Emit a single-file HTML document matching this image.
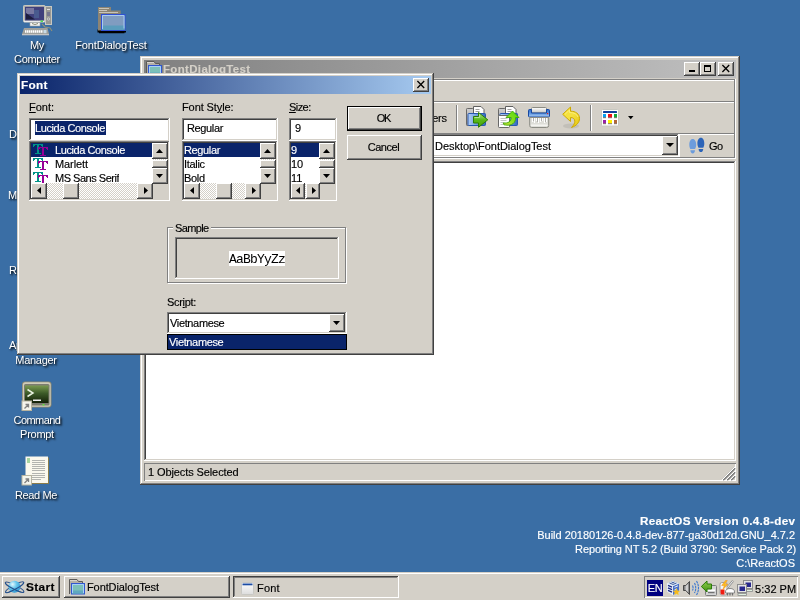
<!DOCTYPE html>
<html><head><meta charset="utf-8"><title>ReactOS</title>
<style>
*{box-sizing:border-box;margin:0;padding:0}
html,body{width:800px;height:600px;overflow:hidden}
body{background:#3A6EA5;position:relative;font-family:"Liberation Sans",sans-serif;font-size:11px;color:#000;line-height:13px}
.a{position:absolute}
.t{position:absolute;white-space:nowrap;line-height:13px;height:13px;-webkit-text-stroke:.15px}
.win{box-shadow:inset -1px -1px #404040,inset 1px 1px #D4D0C8,inset -2px -2px #808080,inset 2px 2px #fff;background:#D4D0C8}
.btn{box-shadow:inset -1px -1px #404040,inset 1px 1px #fff,inset -2px -2px #808080,inset 2px 2px #D4D0C8;background:#D4D0C8}
.sunk{box-shadow:inset -1px -1px #fff,inset 1px 1px #808080,inset -2px -2px #D4D0C8,inset 2px 2px #404040;background:#fff}
.dl{-webkit-text-stroke:0;color:#fff;text-shadow:1px 1px 2px rgba(0,0,0,.85),2px 2px 2px rgba(0,0,0,.45);text-align:center}
.w{color:#fff}
.track{background-color:#fff;background-image:conic-gradient(#D4D0C8 25%,#fff 0 50%,#D4D0C8 0 75%,#fff 0);background-size:2px 2px}
.sel{background:#0A246A;color:#fff}
svg{position:absolute;overflow:visible}
</style></head><body><div id="r" style="position:absolute;left:0;top:0;width:800px;height:600px;will-change:transform">
<!--DESKTOP-->
<!-- My Computer -->
<svg style="left:20px;top:4px" width="32" height="32" viewBox="20 4 32 32">
<rect x="45.500" y="6.500" width="6" height="18" fill="#989894" stroke="#c8c8c0" stroke-width="1"/>
<rect x="47" y="9" width="3" height="1" fill="#e0e0e0"/><rect x="47" y="12" width="3" height="4" fill="#787890"/><circle cx="48.500" cy="19" r="1.200" fill="none" stroke="#d0d0d0" stroke-width=".8"/>
<path d="M42 24l3 3 5 1 2 3" stroke="#909078" stroke-width="1.100" fill="none"/>
<rect x="23.500" y="5.500" width="21.500" height="16.500" rx=".8" fill="#b4b4ac" stroke="#c8c8c0" stroke-width="1"/>
<rect x="24" y="20.500" width="20.500" height="1.600" fill="#ececec"/>
<rect x="25" y="6.800" width="19" height="13.700" fill="#40407c"/>
<path d="M26 8h8v6h-8z" fill="#7878a0"/><path d="M34 10h5v8h-5z" fill="#50709c" opacity=".55"/><path d="M26 13l9 6.500h-9z" fill="#1c1c3c"/>
<rect x="40.500" y="20.500" width="2.500" height="1.400" fill="#40e040"/>
<rect x="30" y="22.500" width="10" height="3.500" fill="#f4f4f4" stroke="#a4a4a0" stroke-width=".6"/>
<path d="M32 23.500q3 2 6 0" stroke="#707050" stroke-width=".8" fill="none"/>
<path d="M24 28h23.500l1.500 6h-27z" fill="#a0a09c"/>
<path d="M25 31.500h17.500" stroke="#fff" stroke-width="2.400" stroke-dasharray="1.500 .5"/><rect x="43.500" y="30" width="3" height="3.200" fill="#c8dce8"/>
<rect x="22" y="34" width="27" height="1.300" fill="#c4c4c4"/>
</svg>
<div class="t dl" style="left:7px;top:39px;width:60px;letter-spacing:-.43px">My</div>
<div class="t dl" style="left:7px;top:53px;width:60px;letter-spacing:-.29px">Computer</div>
<!-- folder -->
<svg style="left:96px;top:4px" width="32" height="32" viewBox="96 4 32 32">
<path d="M97.500 29.500h27.500v1.500h1v1.500h-1.500v.8h-25.500v-.8h-1.500z" fill="#000"/>
<path d="M98 7h13v3.500h9.700v20h-22.700z" fill="#8c8474"/>
<path d="M99 8.500h10M99 10.500h8M99 12.500h19" stroke="#c8c4b8" stroke-width="1"/>
<rect x="101.500" y="14.500" width="23.500" height="16" fill="#809cc0" stroke="#3050d4" stroke-width="1"/>
<rect x="102" y="25.500" width="22.500" height="4.500" fill="#5a9cbc"/>
<path d="M102.500 29v-13.500h21.500v13" stroke="#a8ccf0" stroke-width="1" fill="none"/>
</svg>
<div class="t dl" style="left:71px;top:39px;width:80px;letter-spacing:-.14px">FontDialogTest</div>
<!-- partially hidden labels -->
<div class="t dl" style="left:9px;top:128px;text-align:left">Documents</div>
<div class="t dl" style="left:8px;top:189px;text-align:left">My Network</div>
<div class="t dl" style="left:9px;top:264px;text-align:left">Recycle Bin</div>
<div class="t dl" style="left:9px;top:339px;text-align:left;letter-spacing:-.3px">Applications</div>
<div class="t dl" style="left:6px;top:354px;width:60px;letter-spacing:-.27px">Manager</div>
<!-- Command Prompt -->
<svg style="left:20px;top:379px" width="32" height="32" viewBox="20 379 32 32">
<defs><linearGradient id="cg" x1="0" y1="0" x2="0" y2="1"><stop offset="0" stop-color="#7a9a50"/><stop offset=".45" stop-color="#3c5a28"/><stop offset="1" stop-color="#142008"/></linearGradient></defs>
<rect x="22" y="381.500" width="29.500" height="26" rx="3" fill="#8c8870"/>
<rect x="22.800" y="382.300" width="27.900" height="24.400" rx="2.500" fill="#d0ccb8"/>
<rect x="24" y="384" width="25.500" height="21.500" rx="1.500" fill="#7c7c70"/>
<rect x="25" y="385.500" width="23.500" height="17.500" fill="url(#cg)"/>
<path d="M27.500 389.500l5.500 3.500-5.500 3.500" stroke="#e8f0e0" stroke-width="1.500" fill="none"/>
<rect x="33" y="399.500" width="8" height="1.500" fill="#f0f0f0"/>
<rect x="42.500" y="404" width="2" height="1.500" fill="#60e040"/>
<rect x="22" y="401" width="9.500" height="9.500" fill="#f4f4ec" stroke="#b8b4a0" stroke-width="1"/>
<path d="M24.500 408.500l4-4m-3 0h3v3" stroke="#808080" stroke-width="1.300" fill="none"/>
</svg>
<div class="t dl" style="left:7px;top:414px;width:60px;letter-spacing:-.56px">Command</div>
<div class="t dl" style="left:7px;top:428px;width:60px;letter-spacing:-.28px">Prompt</div>
<!-- Read Me -->
<svg style="left:20px;top:453px" width="32" height="32" viewBox="20 453 32 32">
<rect x="26.500" y="457.500" width="22.500" height="26.500" fill="#8c7c48"/>
<rect x="25.500" y="456.500" width="22.500" height="26.500" fill="#fbf8ee"/>
<rect x="27" y="458" width="3" height="5" fill="#a8d4a0"/>
<path d="M32 460.500h13M32 462.500h13M32 464.500h13M32 466.500h13M32 468.500h13M32 470.500h13M32 473.500h13M32 475.500h13M32 477.500h13M32 479.500h9" stroke="#b4b4b0" stroke-width="1"/>
<rect x="22" y="475.500" width="9.500" height="9.500" fill="#f4f4ec" stroke="#b8b4a0" stroke-width="1"/>
<path d="M24.500 483l4-4m-3 0h3v3" stroke="#808080" stroke-width="1.300" fill="none"/>
</svg>
<div class="t dl" style="left:6px;top:489px;width:60px;letter-spacing:-.38px">Read Me</div>
<!--EXPLORER-->
<div class="a win" style="left:140px;top:56px;width:600px;height:429px"></div>
<div class="a" style="left:144px;top:60px;width:592px;height:18px;background:linear-gradient(90deg,#808080,#C0C0C0)"></div>
<svg style="left:146px;top:61px" width="16" height="16" viewBox="0 0 16 16"><path d="M.5 15V.5H8L9.500 2.500H13.500V5" fill="#b4b0a8" stroke="#5c5a58" stroke-width="1"/><path d="M1 1.500h7" stroke="#d8d4cc" stroke-width="1"/><rect x="2.500" y="4.500" width="13" height="10.500" fill="#7cc0b8" stroke="#3058d0" stroke-width="1"/><rect x="3" y="11.500" width="12" height="3" fill="#60a8c0"/><path d="M3.500 14V5.500H14.500V14" fill="none" stroke="#a8d0f8" stroke-width="1"/></svg>
<div class="t" style="left:163px;top:63px;font-weight:bold;color:#D4D0C8;letter-spacing:.35px;transform:scaleX(1.04);transform-origin:0 0">FontDialogTest</div>
<div class="a btn" style="left:684px;top:62px;width:16px;height:14px"></div>
<div class="a" style="left:689px;top:70px;width:6px;height:2px;background:#000"></div>
<div class="a btn" style="left:700px;top:62px;width:16px;height:14px"></div>
<div class="a" style="left:704px;top:65px;width:7px;height:7px;border:1px solid #000;border-top-width:2px"></div>
<div class="a btn" style="left:718px;top:62px;width:16px;height:14px"></div>
<svg style="left:722px;top:65px" width="8" height="7" viewBox="0 0 8 7"><path d="M0.4 0L7.2 7M7.2 0L0.4 7" stroke="#000" stroke-width="1.3" fill="none"/></svg>
<!-- rebar -->
<div class="a" style="left:144px;top:79px;width:591px;height:1px;background:#808080"></div>
<div class="a" style="left:144px;top:80px;width:592px;height:1px;background:#fff"></div>
<div class="a" style="left:734px;top:79px;width:1px;height:79px;background:#808080"></div>
<div class="a" style="left:735px;top:79px;width:1px;height:80px;background:#fff"></div>
<div class="a" style="left:144px;top:101px;width:590px;height:1px;background:#808080"></div>
<div class="a" style="left:144px;top:102px;width:590px;height:1px;background:#fff"></div>
<div class="a" style="left:144px;top:157px;width:591px;height:1px;background:#808080"></div>
<div class="a" style="left:144px;top:158px;width:592px;height:1px;background:#fff"></div>
<!-- toolbar -->
<div class="t" style="left:412px;top:112px;letter-spacing:-.3px">Folders</div>
<div class="a" style="left:456px;top:105px;width:1px;height:26px;background:#808080"></div>
<div class="a" style="left:457px;top:105px;width:1px;height:26px;background:#fff"></div>
<div class="a" style="left:590px;top:105px;width:1px;height:26px;background:#808080"></div>
<div class="a" style="left:591px;top:105px;width:1px;height:26px;background:#fff"></div>
<!--ICONS-->
<!-- address -->
<div class="a" style="left:144px;top:133px;width:590px;height:1px;background:#808080"></div>
<div class="a sunk" style="left:300px;top:134px;width:379px;height:23px"></div>
<div class="t" style="left:435px;top:140px;letter-spacing:-.04px">Desktop\FontDialogTest</div>
<div class="a btn" style="left:662px;top:136px;width:16px;height:19px"></div>
<svg style="left:666px;top:143px" width="8" height="4" viewBox="0 0 8 4"><path d="M0 0h8L4 4z" fill="#000"/></svg>
<div class="a" style="left:679px;top:134px;width:55px;height:1px;background:#fff"></div>
<div class="a" style="left:679px;top:134px;width:1px;height:23px;background:#fff"></div>
<div class="t" style="left:709px;top:140px;letter-spacing:-.5px">Go</div>
<!-- view -->
<div class="a sunk" style="left:144px;top:161px;width:592px;height:300px"></div>
<!-- status -->
<div class="a" style="left:144px;top:463px;width:592px;height:18px;box-shadow:inset 1px 1px #808080,inset -1px -1px #fff"></div>
<div class="t" style="left:148px;top:466px;letter-spacing:-.1px">1 Objects Selected</div>
<svg style="left:723px;top:468px" width="13" height="13" viewBox="0 0 13 13"><path d="M12 0L0 12M12 4L4 12M12 8L8 12" stroke="#808080" stroke-width="2" fill="none"/><path d="M12 -1L-1 12M12 3L3 12M12 7L7 12" stroke="#fff" stroke-width="1" fill="none"/></svg>
<!--ICONS-->
<svg style="left:462px;top:102px" width="180" height="30" viewBox="462 102 180 30">
<defs>
<linearGradient id="gf" x1="0" y1="0" x2="0" y2="1"><stop offset="0" stop-color="#d0d0d0"/><stop offset="1" stop-color="#9c9c9c"/></linearGradient>
<linearGradient id="bf" x1="0" y1="0" x2="1" y2="0"><stop offset="0" stop-color="#b4d0f4"/><stop offset=".5" stop-color="#6c9ce0"/><stop offset="1" stop-color="#3468c0"/></linearGradient>
<linearGradient id="ga" x1="0" y1="0" x2="0" y2="1"><stop offset="0" stop-color="#b8ec98"/><stop offset=".5" stop-color="#58b818"/><stop offset="1" stop-color="#48a408"/></linearGradient>
<linearGradient id="gb" x1="1" y1="0" x2="0" y2="1"><stop offset="0" stop-color="#48d808"/><stop offset=".6" stop-color="#90e020"/><stop offset="1" stop-color="#e0e040"/></linearGradient>
<linearGradient id="pp" x1="0" y1="0" x2="0" y2="1"><stop offset="0" stop-color="#fff"/><stop offset="1" stop-color="#c4c4c0"/></linearGradient>
<linearGradient id="sb" x1="0" y1="0" x2="0" y2="1"><stop offset="0" stop-color="#2c68c8"/><stop offset=".5" stop-color="#5c94e0"/><stop offset="1" stop-color="#b0d0f4"/></linearGradient>
<linearGradient id="ya" x1="0" y1="0" x2="1" y2="1"><stop offset="0" stop-color="#f8e438"/><stop offset=".5" stop-color="#f4e040"/><stop offset="1" stop-color="#e4c408"/></linearGradient>
<g id="cf">
<rect x="466.500" y="108.500" width="7" height="17" rx=".8" fill="url(#gf)" stroke="#686868" stroke-width="1"/>
<path d="M473.500 106.500h7.500l3 3v5h-10.500z" fill="#fff" stroke="#606060" stroke-width="1"/>
<path d="M475.500 109.500h4M475.500 111.500h4" stroke="#a0a0a0" stroke-width="1"/>
<rect x="468" y="113.500" width="17.500" height="12" rx=".8" fill="url(#bf)" stroke="#2858b0" stroke-width="1"/>
</g>
</defs>
<use href="#cf"/>
<path d="M473.500 116.500h5v-4l9.300 7.300-9.300 7.500v-4.300h-5z" fill="url(#ga)" stroke="#2c7c04" stroke-width="1" stroke-linejoin="round"/>
<path d="M474.500 117.500h5v-3" stroke="#d0f4b8" stroke-width=".8" fill="none" opacity=".8"/>
<use href="#cf" x="32"/>
<rect x="498.500" y="115.500" width="11" height="12" rx=".8" fill="#fff" stroke="#686868" stroke-width="1"/>
<path d="M500.500 118.500h7M500.500 120.500h6M500.500 122.500h4M500.500 124.500h4" stroke="#c4c4c4" stroke-width="1"/>
<path d="M512.500 111l6.500 6.500h-3.500c.3 5-3 9-11.500 7.300l-.8-1.800c5 .5 8-1.500 8-5.500h-5.200z" fill="url(#gb)" stroke="#3cac04" stroke-width=".9" stroke-linejoin="round"/>
<!-- shredder -->
<rect x="531.500" y="107.500" width="15" height="5.500" rx="1" fill="url(#pp)" stroke="#8c8c84" stroke-width="1"/>
<path d="M528.500 110.500q0-1 1-1h2v3.500h15v-3.500h2q1 0 1 1v5.500q0 1-1 1h-19q-1 0-1-1z" fill="url(#sb)" stroke="#1848a0" stroke-width="1"/>
<rect x="547" y="113" width="1.200" height="1.200" fill="#e02020"/>
<path d="M529.700 117.500h19v8q0 2-2 2h-15q-2 0-2-2z" fill="#deded8" stroke="#8c8c84" stroke-width="1"/>
<path d="M532.500 118v4M534.500 118v5M536.500 118v3M538.500 118v5M540.500 118v4M542.500 118v3M544.500 118v5M546.500 118v4" stroke="#fff" stroke-width="1"/>
<path d="M533.500 118v3M537.500 118v4M541.500 118v3M545.500 118v4" stroke="#a4a4a0" stroke-width=".8"/>
<rect x="531" y="124.500" width="16.500" height="1.500" fill="#f4f4f0"/>
<!-- undo -->
<ellipse cx="571" cy="126" rx="8" ry="2.500" fill="#a0a09c" opacity=".35"/>
<path d="M562.700 114.300l7.800-7.300v4.200c5 0 9 2.500 9 7.300 0 4-3 7.200-8 9 2.500-2.500 3.300-4.500 3.300-6.300 0-2-1.500-3.700-4.300-3.700v4z" fill="url(#ya)" stroke="#cca800" stroke-width="1" stroke-linejoin="round"/>
<path d="M565 114.300l4.500-4.300v2.500c4.500 0 7.500 1.500 8.500 4.500" stroke="#fcf088" stroke-width="1" fill="none" opacity=".8"/>
<!-- views -->
<rect x="601.500" y="109.500" width="17" height="16.500" rx="1" fill="#fff" stroke="#c8c8c0" stroke-width="1"/>
<rect x="603" y="111" width="14" height="2" rx=".5" fill="#10409c"/>
<rect x="603" y="114" width="3" height="3.500" fill="#08a0f0"/><rect x="608" y="114" width="4" height="3.500" fill="#f01018"/><rect x="614" y="114" width="3" height="3.500" fill="#10a838"/>
<rect x="603" y="120" width="3" height="3.500" fill="#9820a8"/><rect x="608" y="120" width="4" height="3.500" fill="#fff000"/><rect x="614" y="120" width="3" height="3.500" fill="#b06838"/>
<path d="M603 117.700h3M608 117.700h4M614 117.700h3M603 123.700h3M608 123.700h4M614 123.700h3" stroke="#604838" stroke-width=".7"/>
<path d="M628 116h5.500l-2.750 3.200z" fill="#000"/>
</svg>
<!-- go footprints -->
<svg style="left:688px;top:136px" width="18" height="19" viewBox="688 136 18 19">
<path d="M692.700 139c2.200 0 3.500 2.600 3.500 5.600 0 2-.5 3.400-1.100 4.400h-4.800c-.6-1-1-2.400-1-4.400 0-3 1.200-5.600 3.400-5.600z" fill="#6c9cdc"/><path d="M690.400 150.200h4.600c0 2-1 3.200-2.300 3.200s-2.300-1.200-2.300-3.200z" fill="#6c9cdc"/>
<path d="M700.900 137.700c2.200 0 3.400 2.600 3.400 5.600 0 2-.4 3.400-1 4.400h-4.800c-.6-1-1.100-2.400-1.100-4.400 0-3 1.300-5.600 3.500-5.600z" fill="#2c64b8"/><path d="M698.600 148.900h4.600c0 2-1 3.200-2.300 3.200s-2.300-1.200-2.300-3.200z" fill="#2c64b8"/>
</svg>
<!--DIALOG-->
<div class="a win" style="left:17px;top:73px;width:417px;height:282px"></div>
<div class="a" style="left:20px;top:76px;width:411px;height:18px;background:linear-gradient(90deg,#0A246A,#A6CAF0)"></div>
<div class="t w" style="left:21px;top:79px;font-weight:bold;letter-spacing:.3px;transform:scaleX(1.07);transform-origin:0 0">Font</div>
<div class="a btn" style="left:413px;top:78px;width:16px;height:14px"></div>
<svg style="left:417px;top:81px" width="8" height="7" viewBox="0 0 8 7"><path d="M0.4 0L7.2 7M7.2 0L0.4 7" stroke="#000" stroke-width="1.3" fill="none"/></svg>
<!-- labels -->
<div class="t" style="left:29px;top:101px"><u>F</u>ont:</div>
<div class="t" style="left:182px;top:101px;letter-spacing:-0.1px">Font St<u>y</u>le:</div>
<div class="t" style="left:289px;top:101px;letter-spacing:-0.57px"><u>S</u>ize:</div>
<!-- font combo -->
<div class="a sunk" style="left:29px;top:118px;width:141px;height:23px"></div>
<div class="a sel" style="left:35px;top:121px;width:71px;height:14px"></div>
<div class="t w" style="left:35px;top:122px;letter-spacing:-0.42px">Lucida Console</div>
<div class="a sunk" style="left:29px;top:141px;width:141px;height:60px"></div>
<div class="a sel" style="left:31px;top:143px;width:121px;height:14px"></div>
<div class="t w" style="left:55px;top:144px;letter-spacing:-0.42px">Lucida Console</div>
<div class="t" style="left:55px;top:158px;letter-spacing:-0.09px">Marlett</div>
<div class="t" style="left:55px;top:172px;height:12px;overflow:hidden;letter-spacing:-0.48px">MS Sans Serif</div>
<svg width="0" height="0"><defs><g id="tt"><path d="M0 0h10v3h-1v-1h-1v-1h-2v8h2v1h-6v-1h2v-8h-2v1h-1v1h-1z" fill="#009488"/><path d="M5 3h10v3h-1v-1h-1v-1h-2v7h2v1h-6v-1h2v-7h-2v1h-1v1h-1z" fill="#960096"/></g></defs></svg>
<svg style="left:33px;top:144px" width="16" height="13"><use href="#tt"/></svg>
<svg style="left:33px;top:158px" width="16" height="13"><use href="#tt"/></svg>
<svg style="left:33px;top:172px;overflow:hidden" width="16" height="11"><use href="#tt"/></svg>
<div class="a" style="left:30px;top:140px;width:139px;height:1px;background:#D4D0C8"></div><div class="a" style="left:31px;top:139px;width:137px;height:1px;background:#fff"></div>
<div class="a" style="left:183px;top:140px;width:94px;height:1px;background:#D4D0C8"></div><div class="a" style="left:184px;top:139px;width:92px;height:1px;background:#fff"></div>
<div class="a" style="left:290px;top:140px;width:46px;height:1px;background:#D4D0C8"></div><div class="a" style="left:291px;top:139px;width:44px;height:1px;background:#fff"></div>
<div class="a btn" style="left:152px;top:143px;width:16px;height:16px"></div>
<div class="a track" style="left:152px;top:159px;width:16px;height:9px"></div>
<div class="a btn" style="left:152px;top:160px;width:16px;height:8px"></div>

<div class="a" style="left:31px;top:183px;width:137px;height:16px;background:#D4D0C8"></div>
<div class="a track" style="left:47px;top:183px;width:90px;height:16px"></div>
<div class="a btn" style="left:31px;top:183px;width:16px;height:16px"></div>
<div class="a btn" style="left:63px;top:183px;width:16px;height:16px"></div>
<div class="a btn" style="left:137px;top:183px;width:16px;height:16px"></div>
<div class="a btn" style="left:152px;top:168px;width:16px;height:16px"></div>
<svg style="left:156px;top:149px" width="7" height="4" viewBox="0 0 7 4"><path d="M0 4h7L3.5 0z"/></svg>
<svg style="left:156px;top:174px" width="7" height="4" viewBox="0 0 7 4"><path d="M0 0h7L3.5 4z"/></svg>
<svg style="left:37px;top:187px" width="4" height="7" viewBox="0 0 4 7"><path d="M4 0v7L0 3.5z"/></svg>
<svg style="left:144px;top:187px" width="4" height="7" viewBox="0 0 4 7"><path d="M0 0v7L4 3.5z"/></svg>
<!-- style combo -->
<div class="a sunk" style="left:182px;top:118px;width:96px;height:23px"></div>
<div class="t" style="left:187px;top:122px;letter-spacing:-0.36px">Regular</div>
<div class="a sunk" style="left:182px;top:141px;width:96px;height:60px"></div>
<div class="a sel" style="left:184px;top:143px;width:76px;height:14px"></div>
<div class="t w" style="left:184px;top:144px;letter-spacing:-0.36px">Regular</div>
<div class="t" style="left:184px;top:158px;letter-spacing:-0.3px">Italic</div>
<div class="t" style="left:184px;top:172px;height:12px;overflow:hidden;letter-spacing:-0.3px">Bold</div>
<div class="a btn" style="left:260px;top:143px;width:16px;height:16px"></div>
<div class="a track" style="left:260px;top:159px;width:16px;height:9px"></div>
<div class="a btn" style="left:260px;top:160px;width:16px;height:8px"></div>

<div class="a" style="left:184px;top:183px;width:92px;height:16px;background:#D4D0C8"></div>
<div class="a track" style="left:200px;top:183px;width:45px;height:16px"></div>
<div class="a btn" style="left:184px;top:183px;width:16px;height:16px"></div>
<div class="a btn" style="left:216px;top:183px;width:16px;height:16px"></div>
<div class="a btn" style="left:245px;top:183px;width:16px;height:16px"></div>
<div class="a btn" style="left:260px;top:168px;width:16px;height:16px"></div>
<svg style="left:264px;top:149px" width="7" height="4" viewBox="0 0 7 4"><path d="M0 4h7L3.5 0z"/></svg>
<svg style="left:264px;top:174px" width="7" height="4" viewBox="0 0 7 4"><path d="M0 0h7L3.5 4z"/></svg>
<svg style="left:190px;top:187px" width="4" height="7" viewBox="0 0 4 7"><path d="M4 0v7L0 3.5z"/></svg>
<svg style="left:252px;top:187px" width="4" height="7" viewBox="0 0 4 7"><path d="M0 0v7L4 3.5z"/></svg>
<!-- size combo -->
<div class="a sunk" style="left:289px;top:118px;width:48px;height:23px"></div>
<div class="t" style="left:295px;top:122px">9</div>
<div class="a sunk" style="left:289px;top:141px;width:48px;height:60px"></div>
<div class="a sel" style="left:291px;top:143px;width:28px;height:14px"></div>
<div class="t w" style="left:291px;top:144px">9</div>
<div class="t" style="left:291px;top:158px">10</div>
<div class="t" style="left:291px;top:172px;height:12px;overflow:hidden">11</div>
<div class="a btn" style="left:319px;top:143px;width:16px;height:16px"></div>
<div class="a track" style="left:319px;top:159px;width:16px;height:9px"></div>
<div class="a btn" style="left:319px;top:160px;width:16px;height:8px"></div>

<div class="a" style="left:291px;top:183px;width:44px;height:16px;background:#D4D0C8"></div>
<div class="a btn" style="left:291px;top:183px;width:14px;height:16px"></div>
<div class="a track" style="left:305px;top:183px;width:1px;height:16px"></div><div class="a btn" style="left:306px;top:183px;width:14px;height:16px"></div>
<div class="a btn" style="left:319px;top:168px;width:16px;height:16px"></div>
<svg style="left:323px;top:149px" width="7" height="4" viewBox="0 0 7 4"><path d="M0 4h7L3.5 0z"/></svg>
<svg style="left:323px;top:174px" width="7" height="4" viewBox="0 0 7 4"><path d="M0 0h7L3.5 4z"/></svg>
<svg style="left:296px;top:187px" width="4" height="7" viewBox="0 0 4 7"><path d="M4 0v7L0 3.5z"/></svg>
<svg style="left:312px;top:187px" width="4" height="7" viewBox="0 0 4 7"><path d="M0 0v7L4 3.5z"/></svg>
<!-- buttons -->
<div class="a" style="left:347px;top:106px;width:75px;height:25px;background:#000"></div>
<div class="a btn" style="left:348px;top:107px;width:73px;height:23px"></div>
<div class="t" style="left:346px;top:112px;width:75px;text-align:center;letter-spacing:-1.2px">OK</div>
<div class="a btn" style="left:347px;top:135px;width:75px;height:25px"></div>
<div class="t" style="left:346px;top:141px;width:75px;text-align:center;letter-spacing:-0.44px">Cancel</div>
<!-- sample -->
<div class="a" style="left:167px;top:227px;width:179px;height:56px;border:1px solid #808080;box-shadow:inset 1px 1px #fff,1px 1px #fff"></div>
<div class="t" style="left:173px;top:222px;background:#D4D0C8;padding:0 2px;letter-spacing:-0.63px">Sample</div>
<div class="a sunk" style="left:175px;top:237px;width:164px;height:42px;background:#D4D0C8"></div>
<div class="a" style="left:229px;top:251px;width:56px;height:15px;background:#fff"></div><div class="t" style="left:229px;top:251px;height:15px;line-height:17px;font-family:'Liberation Mono',monospace;font-size:13px;letter-spacing:-.8px;-webkit-text-stroke:0">AaBbYyZz</div>
<!-- script -->
<div class="t" style="left:167px;top:296px;letter-spacing:-0.3px">Scr<u>i</u>pt:</div>
<div class="a sunk" style="left:167px;top:312px;width:180px;height:22px"></div>
<div class="t" style="left:170px;top:317px;letter-spacing:-0.35px">Vietnamese</div>
<div class="a btn" style="left:329px;top:314px;width:16px;height:18px"></div>
<svg style="left:333px;top:321px" width="7" height="4" viewBox="0 0 7 4"><path d="M0 0h7L3.5 4z"/></svg>
<div class="a" style="left:167px;top:334px;width:180px;height:16px;background:#0A246A;border:1px solid #000"></div>
<div class="t w" style="left:169px;top:336px;letter-spacing:-0.35px">Vietnamese</div>
<!--VERSION-->
<div class="t w" style="right:5px;top:515px;font-weight:bold;letter-spacing:.3px;transform:scaleX(1.062);transform-origin:100% 0">ReactOS Version 0.4.8-dev</div>
<div class="t w" style="right:5px;top:529px;letter-spacing:-.02px">Build 20180126-0.4.8-dev-877-ga30d12d.GNU_4.7.2</div>
<div class="t w" style="right:4px;top:543px;letter-spacing:-.1px">Reporting NT 5.2 (Build 3790: Service Pack 2)</div>
<div class="t w" style="right:5px;top:557px;letter-spacing:0px">C:\ReactOS</div>
<!--TASKBAR-->
<div class="a" style="left:0;top:572px;width:800px;height:28px;background:#D4D0C8;border-top:1px solid #D4D0C8;box-shadow:inset 0 1px #fff"></div>
<div class="a btn" style="left:2px;top:576px;width:58px;height:22px"></div>
<svg style="left:4px;top:578px" width="21" height="17" viewBox="4 578 21 17">
<defs><radialGradient id="gl" cx=".35" cy=".3" r=".75"><stop offset="0" stop-color="#e4f8ff"/><stop offset=".45" stop-color="#68c8ec"/><stop offset="1" stop-color="#2c94d0"/></radialGradient></defs>
<g fill="none" stroke="#34588c" stroke-width="1.200">
<ellipse cx="0" cy="0" rx="10.300" ry="2.100" transform="translate(14.600 587.200) rotate(27)"/>
<ellipse cx="0" cy="0" rx="10.300" ry="2.100" transform="translate(14.600 587.200) rotate(-29)"/>
</g>
<circle cx="14.400" cy="586.700" r="6" fill="url(#gl)"/>
<g fill="none" stroke="#24508c" stroke-width="1.100">
<path d="M-10.300 0A10.300 2.100 0 0 0 10.300 0" transform="translate(14.600 587.200) rotate(27)"/>
<path d="M-10.300 0A10.300 2.100 0 0 0 10.300 0" transform="translate(14.600 587.200) rotate(-29)"/>
</g>
</svg>
<div class="t" style="left:26px;top:581px;font-weight:bold;letter-spacing:.3px;transform:scaleX(1.08);transform-origin:0 0">Start</div>
<div class="a btn" style="left:64px;top:576px;width:166px;height:22px"></div>
<svg style="left:69px;top:579px" width="16" height="16" viewBox="0 0 16 16"><path d="M.5 15V.5H8L9.500 2.500H13.500V5" fill="#b4b0a8" stroke="#5c5a58" stroke-width="1"/><path d="M1 1.500h7" stroke="#d8d4cc" stroke-width="1"/><rect x="2.500" y="4.500" width="13" height="10.500" fill="#7cc0b8" stroke="#3058d0" stroke-width="1"/><rect x="3" y="11.500" width="12" height="3" fill="#60a8c0"/><path d="M3.500 14V5.500H14.500V14" fill="none" stroke="#a8d0f8" stroke-width="1"/></svg>
<div class="t" style="left:87px;top:581px;letter-spacing:-.1px">FontDialogTest</div>
<div class="a" style="left:233px;top:576px;width:166px;height:22px;box-shadow:inset -1px -1px #fff,inset 1px 1px #404040,inset -2px -2px #D4D0C8,inset 2px 2px #808080;background:#D4D0C8"></div>
<svg style="left:241px;top:582px" width="13" height="13" viewBox="0 0 13 13"><defs><linearGradient id="wg" x1="0" y1="0" x2="0" y2="1"><stop offset="0" stop-color="#fff"/><stop offset="1" stop-color="#dcdcdc"/></linearGradient></defs><rect x=".5" y=".5" width="12" height="12" rx="1" fill="url(#wg)" stroke="#c8c8c4" stroke-width="1"/><rect x="1.500" y="1.500" width="10" height="1.800" fill="#1c4ca4"/></svg>
<div class="t" style="left:257px;top:582px;letter-spacing:.2px">Font</div>
<div class="a" style="left:644px;top:576px;width:154px;height:22px;box-shadow:inset 1px 1px #808080,inset -1px -1px #fff"></div>
<div class="a" style="left:647px;top:580px;width:16px;height:16px;background:#000080"></div>
<div class="t w" style="left:647px;top:582px;width:16px;text-align:center;letter-spacing:-.5px">EN</div>
<svg style="left:664px;top:578px" width="92" height="20" viewBox="664 578 92 20">
<defs><linearGradient id="sg" x1="0" y1="0" x2="1" y2="0"><stop offset="0" stop-color="#606060"/><stop offset=".6" stop-color="#e8e8e8"/><stop offset="1" stop-color="#505050"/></linearGradient>
<linearGradient id="ag" x1="0" y1="0" x2="0" y2="1"><stop offset="0" stop-color="#90d050"/><stop offset="1" stop-color="#409010"/></linearGradient></defs>
<!-- vbox cube -->
<path d="M673 581l6 2.500v8l-6 3.500-6-3.500v-8z" fill="#f0f4f8"/>
<path d="M667 583.500l6 2.500v9l-6-3.500z" fill="#e8eef8"/>
<path d="M679 583.500l-6 2.500v9l6-3.500z" fill="#4870c8"/>
<path d="M673 581l6 2.500-6 2.500-6-2.500z" fill="#dce8f4"/>
<path d="M668 585.300l4 1.800M668 587.800l4 1.800M668 590.300l4 1.800" stroke="#1c2c84" stroke-width="1.300"/>
<path d="M674.500 587.300l3.500-1.500M674.500 589.800l2-.9" stroke="#e8f0f8" stroke-width="1"/>
<path d="M669.500 583l3.500 1.400 3.500-1.400M671.500 582l1.500.6 1.500-.6" stroke="#2c4c94" stroke-width=".9" fill="none"/>
<path d="M676.500 588.500l1 2.200 2.300.3-1.700 1.600.5 2.400-2.100-1.200-2.100 1.200.5-2.400-1.700-1.600 2.300-.3z" fill="#f8b818" stroke="#f8d850" stroke-width=".4"/>
<!-- speaker -->
<path d="M683.500 585.500h2.300l3.700-4v13l-3.700-4h-2.300z" fill="url(#sg)" stroke="#484848" stroke-width="1" stroke-linejoin="round"/>
<path d="M692.500 585.500q1.200 2.500 0 5M694.500 583q2.500 5 0 10M696.500 581q4 7 0 14" stroke="#3c78d0" stroke-width="1.100" fill="none" stroke-dasharray="2.500 .6"/>
<!-- safely remove -->
<rect x="705.500" y="585.500" width="11" height="10" rx="1" fill="#d4d4d4" stroke="#7c7c7c" stroke-width="1"/>
<rect x="707" y="589.500" width="8" height="1.500" fill="#fff"/><rect x="708" y="592" width="6.500" height="1.200" fill="#707070"/>
<path d="M701.300 586.500l5.700-5.500v3h4.500v5h-4.500v3z" fill="url(#ag)" stroke="#2c7c08" stroke-width="1" stroke-linejoin="round"/>
<!-- power -->
<path d="M727 588l5.500-6.500" stroke="#909090" stroke-width="2.200" fill="none" stroke-linecap="round"/><path d="M727 588l5.500-6.500" stroke="#f0f0f0" stroke-width="1" fill="none" stroke-linecap="round"/>
<rect x="720" y="582.500" width="7" height="12.500" rx="1.800" fill="#f4f4f4" stroke="#a0a0a0" stroke-width="1"/>
<path d="M720.500 589.500h4v5h-2.500q-1.500 0-1.500-1.500z" fill="#f01c10"/>
<path d="M725.500 580.500l-3.800 5h2.600l-1.600 4.500 5-5.800h-2.800l2.400-3.700z" fill="#f8c020" stroke="#f88c10" stroke-width=".5"/>
<path d="M725.500 592q0-3.500 4.500-3.500t4.500 3.500v1h-9z" fill="#fff" stroke="#888" stroke-width="1"/>
<path d="M727.500 593v2.500M730 593v2.500M732.500 593v2.500" stroke="#707070" stroke-width="1.300"/>
<!-- network -->
<rect x="743.500" y="580.500" width="9" height="8" fill="#e4e4e4" stroke="#8c8c8c" stroke-width="1"/>
<rect x="745.500" y="582.500" width="5.500" height="4.500" fill="#28288c"/>
<rect x="745" y="589.500" width="7.500" height="2" fill="#e0f0e0" stroke="#8c8c8c" stroke-width=".8"/>
<rect x="737.500" y="584.500" width="9" height="8" fill="#e4e4e4" stroke="#8c8c8c" stroke-width="1"/>
<rect x="739.500" y="586.500" width="5.500" height="4.500" fill="#28288c"/>
<rect x="738" y="593.500" width="8.500" height="2" fill="#e0f0e0" stroke="#8c8c8c" stroke-width=".8"/>
</svg>
<div class="t" style="left:755px;top:583px;letter-spacing:.03px">5:32 PM</div>
</div></body></html>
